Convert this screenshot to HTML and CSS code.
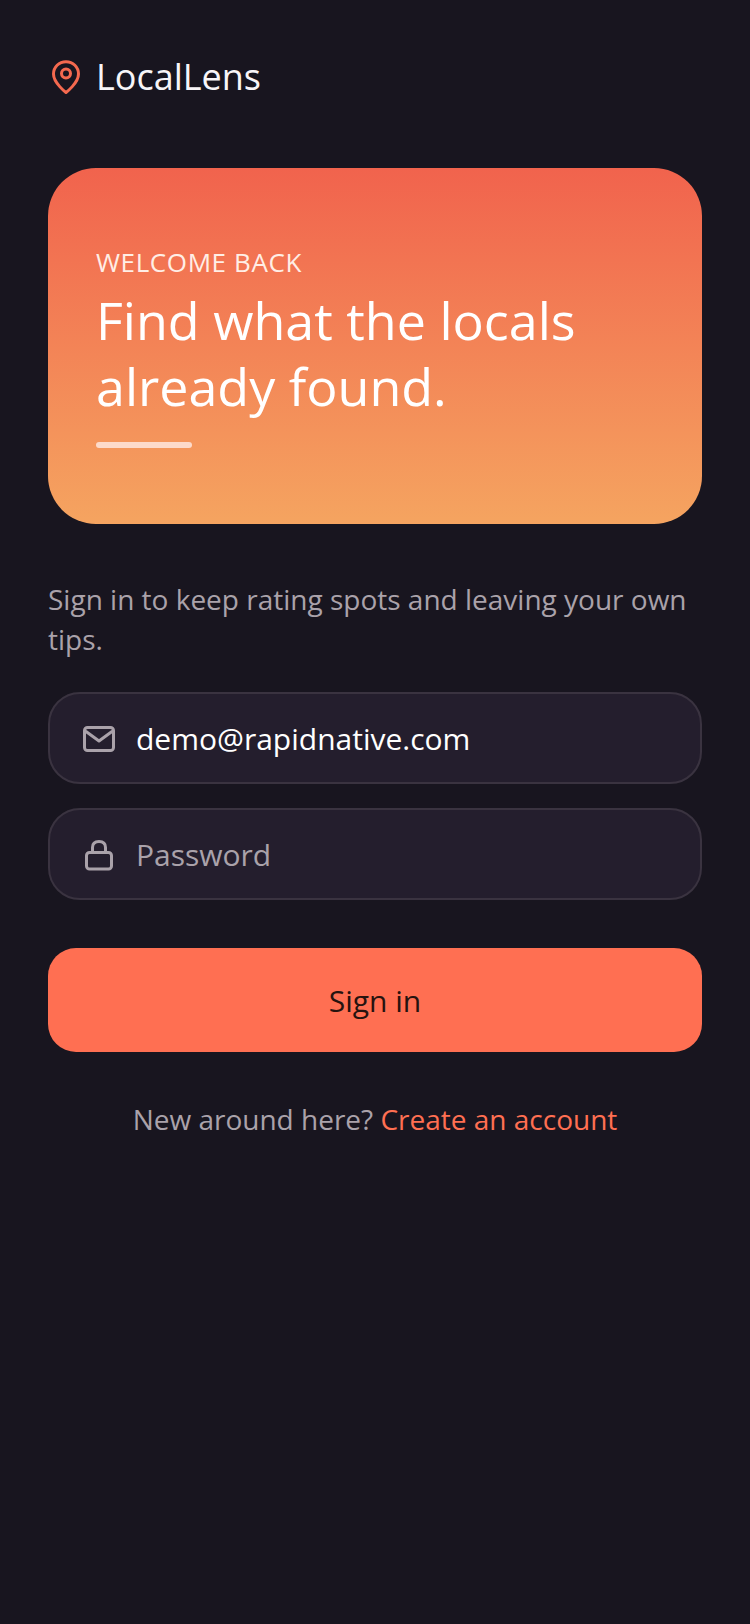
FILE: index.html
```html
<!DOCTYPE html>
<html lang="en">
<head>
<meta charset="UTF-8">
<meta name="viewport" content="width=device-width, initial-scale=1.0">
<title>LocalLens</title>
<link rel="stylesheet" href="styles.css">
</head>
<body>

<div class="container">
    <div class="brand">
        <svg class="brand-icon" viewBox="0 0 28 34" fill="none" stroke="#f4694f" stroke-width="3" stroke-linecap="round" stroke-linejoin="round">
            <path d="M14 32.500C14 32.500 26.500 23 26.500 14C26.500 7 21 1.800 14 1.800C7 1.800 1.500 7 1.500 14C1.500 23 14 32.500 14 32.500Z"/>
            <circle cx="14" cy="13.500" r="4.500"/>
        </svg>
        <span class="brand-name">LocalLens</span>
    </div>

    <div class="hero">
        <div class="hero-label">WELCOME BACK</div>
        <h1>Find what the locals already found.</h1>
        <div class="hero-rule"></div>
    </div>

    <p class="intro">Sign in to keep rating spots and leaving your own tips.</p>

    <div class="field">
        <svg class="field-icon" viewBox="0 0 32 34" fill="none" stroke="#aaa2aa" stroke-width="3" stroke-linecap="round" stroke-linejoin="round">
            <rect x="1.500" y="6.500" width="29" height="23" rx="3"/>
            <path d="M3 10.500L16 20L29 10.500"/>
        </svg>
        <span class="field-value">demo@rapidnative.com</span>
    </div>

    <div class="field">
        <svg class="field-icon" viewBox="0 0 32 34" fill="none" stroke="#aaa2aa" stroke-width="3" stroke-linecap="round" stroke-linejoin="round">
            <rect x="3.500" y="15.500" width="25" height="16.500" rx="3"/>
            <path d="M9.500 15.500V10.500C9.500 6.500 12 4.500 16 4.500C20 4.500 22.500 6.500 22.500 10.500V15.500"/>
        </svg>
        <span class="field-placeholder">Password</span>
    </div>

    <button class="signin">Sign in</button>

    <p class="footer">New around here? <a href="#">Create an account</a></p>
</div>

</body>
</html>
```

FILE: styles.css
```css
body {
    font-family: "Open Sans", sans-serif;
    margin: 0;
    padding: 0;
    background-color: #18151f;
    color: #fff;
}
.container {
    min-height: 1624px;
    box-sizing: border-box;
    padding: 51px 48px 0;
    display: flex;
    flex-direction: column;
}
.brand {
    display: flex;
    align-items: center;
    gap: 16px;
    height: 50px;
    margin-bottom: 67px;
    padding-left: 4px;
}
.brand-icon {
    width: 28px;
    height: 34px;
    margin-top: 2px;
}
.brand-name {
    font-size: 36px;
    color: #f8f5f8;
}
.hero {
    height: 356px;
    box-sizing: border-box;
    padding: 80px 48px 0;
    border-radius: 48px;
    background: linear-gradient(180deg, #f1634d 0%, #f5a460 100%);
}
.hero-label {
    font-size: 26px;
    line-height: 28px;
    letter-spacing: 0.600px;
    color: #ffeee6;
    margin-bottom: 11px;
}
h1 {
    font-size: 52px;
    line-height: 66px;
    font-weight: 400;
    margin: 0;
}
.hero-rule {
    width: 96px;
    height: 6px;
    margin-top: 23px;
    border-radius: 3px;
    background-color: #fddaca;
}
.intro {
    font-size: 28px;
    line-height: 40px;
    color: #aaa2aa;
    margin: 55px 0 33px;
}
.field {
    display: flex;
    align-items: center;
    gap: 21px;
    height: 92px;
    box-sizing: border-box;
    padding: 0 33px;
    margin-bottom: 24px;
    border: 2px solid #3a3340;
    border-radius: 32px;
    background-color: #241e2d;
    font-size: 30px;
}
.field-icon {
    width: 32px;
    height: 34px;
}
.field-value {
    color: #fff;
}
.field-placeholder {
    color: #aaa2aa;
}
.signin {
    height: 104px;
    margin-top: 24px;
    border: none;
    border-radius: 28px;
    background-color: #ff6f52;
    color: #26130f;
    font-family: inherit;
    font-size: 30px;
}
.footer {
    font-size: 28px;
    line-height: 40px;
    text-align: center;
    color: #aaa2aa;
    margin: 47px 0 0;
}
.footer a {
    color: #ff6f52;
    text-decoration: none;
}
```
